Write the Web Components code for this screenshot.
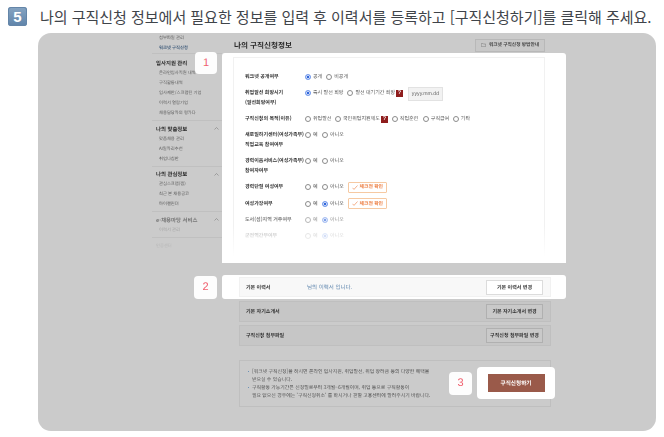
<!DOCTYPE html>
<html lang="ko">
<head>
<meta charset="utf-8">
<title>구직신청 안내</title>
<style>
  html, body { margin: 0; background: #fff; }
  body { width: 664px; height: 437px; overflow: hidden; font-family: "Noto Sans CJK KR", "Noto Sans", sans-serif; color: #333; }
</style>
</head>
<body>
<step-heading num="5">나의 구직신청 정보에서 필요한 정보를 입력 후 이력서를 등록하고 [구직신청하기]를 클릭해 주세요.</step-heading>

<guide-panel>
  <side-menu slot="side"></side-menu>

  <page-title slot="main">나의 구직신청정보</page-title>

  <apply-form slot="main">
    <call-badge>1</call-badge>
    <form-row>
      <span slot="label">워크넷 공개여부</span>
      <radio-opt on gap="4">공개</radio-opt><radio-opt>비공개</radio-opt>
    </form-row>
    <form-row>
      <span slot="label">취업알선 희망시기<br>(알선희망여부)</span>
      <radio-opt on gap="4">즉시 알선 희망</radio-opt><radio-opt gap="1">알선 대기기간 희망</radio-opt><help-mark></help-mark><date-box>yyyy.mm.dd</date-box>
    </form-row>
    <form-row>
      <span slot="label">구직신청의 목적(이유)</span>
      <radio-opt gap="3.6">취업알선</radio-opt><radio-opt gap="1">국민취업지원제도</radio-opt><help-mark></help-mark><radio-opt gap="4.6" style="margin-left:4px">직업훈련</radio-opt><radio-opt gap="3.6">구직급여</radio-opt><radio-opt>기타</radio-opt>
    </form-row>
    <form-row>
      <span slot="label">새로일하기센터(여성가족부)<br>직업교육 참여여부</span>
      <radio-opt gap="4.4">예</radio-opt><radio-opt>아니오</radio-opt>
    </form-row>
    <form-row>
      <span slot="label">경력이음서비스(여성가족부)<br>참여자여부</span>
      <radio-opt gap="4.4">예</radio-opt><radio-opt>아니오</radio-opt>
    </form-row>
    <form-row>
      <span slot="label">경력단절 여성여부</span>
      <radio-opt gap="4.4">예</radio-opt><radio-opt gap="4">아니오</radio-opt><check-tag>체크전 확인</check-tag>
    </form-row>
    <form-row>
      <span slot="label">여성가장여부</span>
      <radio-opt gap="4.4">예</radio-opt><radio-opt on gap="4">아니오</radio-opt><check-tag>체크전 확인</check-tag>
    </form-row>
    <form-row style="opacity:.62">
      <span slot="label">도서(섬)지역 거주여부</span>
      <radio-opt gap="4.4">예</radio-opt><radio-opt on>아니오</radio-opt>
    </form-row>
    <form-row style="opacity:.3">
      <span slot="label">군전역간부여부</span>
      <radio-opt gap="4.4">예</radio-opt><radio-opt on>아니오</radio-opt>
    </form-row>
  </apply-form>

  <resume-row slot="main" lit action="기본 이력서 변경" badge="2">
    <span slot="label">기본 이력서</span>
    <span slot="value">님의 이력서 입니다.</span>
  </resume-row>
  <resume-row slot="main" action="기본 자기소개서 변경"><span slot="label">기본 자기소개서</span></resume-row>
  <resume-row slot="main" action="구직신청 첨부파일 변경"><span slot="label">구직신청 첨부파일</span></resume-row>

  <notice-box slot="main"></notice-box>
</guide-panel>

<script>
function define(name, css, html, init) {
  customElements.define(name, class extends HTMLElement {
    connectedCallback() {
      if (this.shadowRoot) return;
      this.attachShadow({ mode: 'open' });
      this.shadowRoot.innerHTML = '<style>' + css + '</style>' + (typeof html === 'function' ? html(this) : html);
      if (init) init(this);
    }
  });
}

define('step-heading', `
  :host { display: flex; align-items: center; gap: 13px; height: 33px; padding: 0 0 0 8px; box-sizing: border-box; }
  .num { width: 19px; height: 19px; border-radius: 3px; background: linear-gradient(#86a4c2, #5f84aa); color: #fff;
    font: bold 15px/19px "Liberation Sans", sans-serif; text-align: center; box-shadow: inset 0 0 0 1px #6485a8; flex: none; }
  .txt { font-size: 15px; letter-spacing: -.02px; color: #3f444a; white-space: nowrap; font-weight: 400; }
`, el => `<div class="num">${el.getAttribute('num')}</div><div class="txt"><slot></slot></div>`);

define('guide-panel', `
  :host { display: flex; width: 618px; height: 398px; margin-left: 38px; padding-left: 114px; box-sizing: border-box;
    background: #cbcbcb; border-radius: 13px; overflow: hidden; text-rendering: geometricPrecision; }
  .side { width: 70px; flex: none; filter: blur(.35px); }
  .main { width: 344px; flex: none; display: flex; flex-direction: column; filter: blur(.35px); }
`, `<div class="side"><slot name="side"></slot></div><div class="main"><slot name="main"></slot></div>`);

const MENU = [
  { items: ['첨부파일 관리', '워크넷 구직신청'], top: true },
  { head: '입사지원 관리', items: ['온라인입사지원 내역', '구직활동내역', '입사제안/스크랩된 기업', '이력서 열람기업', '채용담당자의 평가다'], first: true },
  { head: '나의 맞춤정보', items: ['맞춤채용 관리', 'AI일자리추천', '취업나침반'], arrow: true },
  { head: '나의 관심정보', items: ['관심스크랩(찜)', '최근 본 채용공고', '마이캘린더'], arrow: true },
  { head: 'e-채용마당 서비스', items: ['이력서 관리'], arrow: true, dim: true },
];

define('side-menu', `
  :host { display: block; font-size: 4.3px; color: #5c5c5c; line-height: 10px; }
  section { border-bottom: 1px solid #c0c0c0; padding: 2.5px 0 2px 4px; position: relative; }
  section.top { padding: 0 0 0 4px; height: 21px; box-sizing: border-box; }
  section.first { padding-top: 4px; }
  h4 { margin: 0; font-size: 5.4px; line-height: 10px; color: #2b2b2b; font-weight: 700; }
  div { padding-left: 3px; white-space: nowrap; }
  .cur { color: #4a6480; font-weight: 700; }
  .dim h4 { color: #777; } .dim div { color: #a4a4a4; }
  svg { position: absolute; right: 3px; top: 6px; }
  .last { padding: 3px 0 0 4px; color: #b8b8b8; }
`, () => MENU.map(g => `<section class="${g.top ? 'top' : ''} ${g.first ? 'first' : ''} ${g.dim ? 'dim' : ''}">
    ${g.head ? `<h4>${g.head}</h4>` : ''}
    ${g.arrow ? '<svg width="5" height="3" viewBox="0 0 5 3"><path d="M.5 2.5l2-2 2 2" fill="none" stroke="#888" stroke-width=".7"/></svg>' : ''}
    ${g.items.map(t => `<div class="${t === '워크넷 구직신청' ? 'cur' : ''}">${t}</div>`).join('')}
  </section>`).join('') + '<div class="last">인증센터</div>');

define('page-title', `
  :host { display: flex; align-items: center; justify-content: space-between; height: 20px; padding: 4px 21px 0 12px; box-sizing: border-box; }
  b { font-size: 7.6px; color: #2c2c2c; font-weight: 700; }
  .btn { display: flex; align-items: center; justify-content: center; gap: 3px; width: 70px; height: 13px; box-sizing: border-box;
    border: 1px solid #b8b8b8; background: #c8c8c8; font-size: 4.7px; font-weight: 700; color: #444; }
`, `<b><slot></slot></b><div class="btn"><svg width="5" height="4" viewBox="0 0 5 4"><path d="M.3.4h1.6l.5.6h2.3v2.7H.3z" fill="none" stroke="#777" stroke-width=".5"/></svg>워크넷 구직신청 방법안내</div>`);

define('apply-form', `
  :host { display: block; position: relative; height: 210px; background: #fff; border-radius: 3px 3px 0 0; padding: 4px 21px 0 11px; box-sizing: border-box; }
  .box { height: 206px; box-sizing: border-box; padding: 14px 0 0 11px; display: flex; flex-direction: column; gap: 6px;
    border: 1px solid #f1f1f1; border-bottom: 0; -webkit-mask-image: linear-gradient(#000 82%, transparent 97%); mask-image: linear-gradient(#000 82%, transparent 97%); }
  ::slotted(call-badge) { position: absolute; left: -27px; top: -1px; }
`, `<slot name="none"></slot><div class="box"><slot></slot></div>`, el => {
  el.querySelector('call-badge').setAttribute('slot', 'none');
});

define('call-badge', `
  :host { display: block; width: 22px; height: 22px; background: #fdfdfd; border-radius: 4px; text-align: center;
    font: 11px/22px "Liberation Sans", sans-serif; color: #f0606f; }
`, `<slot></slot>`);

define('form-row', `
  :host { display: flex; font-size: 5px; line-height: 10px; color: #555; min-height: 10px; }
  .label { width: 60px; flex: none; font-weight: 700; color: #333; white-space: nowrap; font-size: 5px; }
  .opts { display: flex; align-items: flex-start; position: relative; }
`, `<div class="label"><slot name="label"></slot></div><div class="opts"><slot></slot></div>`);

define('radio-opt', `
  :host { display: inline-flex; align-items: center; height: 10px; white-space: nowrap; }
  i { width: 6px; height: 6px; box-sizing: border-box; border-radius: 50%; border: .7px solid #8b8b8b; background: #fff; margin-right: 2px; flex: none; }
  :host([on]) i { border: 1px solid #7ea2ec; background: #2f66dc; box-shadow: inset 0 0 0 .8px #fff; }
`, el => `<i></i><span><slot></slot></span>`, el => {
  el.style.marginRight = (el.getAttribute('gap') ?? 8) + 'px';
});

define('help-mark', `
  :host { display: inline-block; width: 7px; height: 7px; margin-top: 1.5px; background: #8f1d1d; color: #fff; text-align: center;
    font: bold 5.5px/7px "Liberation Sans", sans-serif; }
`, `?`);

define('date-box', `
  :host { display: block; width: 35px; height: 14px; margin: -1px 0 0 5px; box-sizing: border-box; background: #f2f2f2; border: .7px solid #e2e2e2;
    font: 5.2px/13px "Liberation Sans", sans-serif; color: #666; text-align: center; }
`, `<slot></slot>`);

define('check-tag', `
  :host { display: flex; align-items: center; justify-content: center; gap: 2px; width: 39px; height: 11px; margin-top: -.5px; box-sizing: border-box;
    border: .8px solid #f6c9a2; border-radius: 1px; background: #fff; color: #ec7a3c; font-size: 4.8px; font-weight: 700; white-space: nowrap; }
`, `<svg width="6" height="5" viewBox="0 0 6 5"><path d="M.5 2.8l1.5 1.6L5.5.5" fill="none" stroke="#ec7a3c" stroke-width=".6"/></svg><slot></slot>`);

define('resume-row', `
  :host { display: block; position: relative; margin: 3px 15px 0 17px; }
  :host([lit]) { margin-top: 14px; margin-bottom: 1px; }
  .row { position: relative; display: flex; align-items: center; height: 21px; padding: 0 7px 0 6px; box-sizing: border-box;
    border: 1px solid #bfbfbf; background: #c6c6c6; font-size: 5px; font-weight: 700; color: #333; }
  :host([lit]) .row { height: 20px; background: #f8f8f8; border-color: #f1f1f1; }
  :host([lit]) .halo { position: absolute; inset: -2px -15px -2px -17px; background: #fff; border-radius: 3px; }
  .label { width: 61px; white-space: nowrap; }
  .value { flex: 1; color: #5f86ae; font-weight: 400; font-size: 5.5px; }
  .btn { width: 57px; height: 15px; margin-left: auto; box-sizing: border-box; border: 1px solid #b0b0b0; background: #c9c9c9; text-align: center;
    line-height: 13px; font-size: 5px; color: #333; white-space: nowrap; }
  :host([lit]) .btn { border-color: #dcdcdc; background: #fff; }
  .badge { position: absolute; left: -45px; top: -1px; width: 23px; height: 23px; background: #fdfdfd; border-radius: 4px; text-align: center;
    font: 11px/23px "Liberation Sans", sans-serif; color: #f0606f; }
`, el => `<div class="halo"></div>
  <div class="row">
    <div class="label"><slot name="label"></slot></div>
    <div class="value"><slot name="value"></slot></div>
    <div class="btn">${el.getAttribute('action')}</div>
  </div>
  ${el.hasAttribute('badge') ? `<div class="badge">${el.getAttribute('badge')}</div>` : ''}`);

define('notice-box', `
  :host { display: flex; align-items: center; position: relative; height: 47px; margin: 14px 15px 0 17px; box-sizing: border-box; border: 1px solid #bfbfbf;
    padding-left: 8px; font-size: 4.9px; line-height: 8px; color: #555; }
  ul { margin: 0; padding: 0; list-style: none; width: 190px; }
  li { position: relative; padding-left: 4px; white-space: nowrap; }
  li::before { content: ""; position: absolute; left: 0; top: 3px; width: 1.4px; height: 1.4px; border-radius: 50%; background: #4f80b0; }
  .badge { position: absolute; left: 209px; top: 11px; width: 23px; height: 23px; background: #fdfdfd; border-radius: 4px; text-align: center;
    font: 11px/23px "Liberation Sans", sans-serif; color: #f0606f; }
  .halo { position: absolute; left: 237px; top: 6px; width: 78px; height: 32px; background: #fff; border-radius: 4px; display: flex; align-items: center; justify-content: center; }
  button { all: unset; width: 57px; height: 18px; background: #9a5a4a; color: #fff; font-size: 5.6px; font-weight: 700; text-align: center; line-height: 18px; }
`, `<ul>
    <li>[워크넷 구직신청]을 하시면 온라인 입사지원, 취업알선, 취업 장려금 등의 다양한 혜택을<br>받으실 수 있습니다.</li>
    <li>구직활동 가능기간은 신청일로부터 3개월~6개월이며, 취업 등으로 구직활동이<br>필요 없으신 경우에는 '구직신청취소' 를 하시거나 관할 고용센터에 알려주시기 바랍니다.</li>
  </ul>
  <div class="badge">3</div>
  <div class="halo"><button>구직신청하기</button></div>`);
</script>
</body>
</html>
